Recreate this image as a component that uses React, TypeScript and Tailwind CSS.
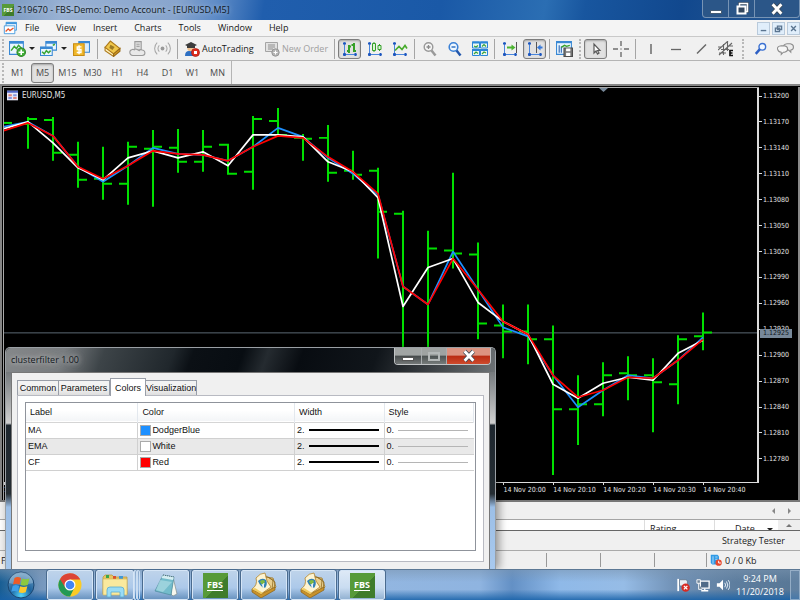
import { ReactNode, useState } from "react";
import clsx from "clsx";

const UI_FONT = "font-['Open_Sans','Noto_Sans',sans-serif]";
const TAHOMA = "font-['DejaVu_Sans_Condensed','DejaVu_Sans',sans-serif]";
const DIALOG_FONT = "font-['Liberation_Sans',Arial,sans-serif]";

type Bar = { x: number; high: number; low: number; open?: number; close?: number };

const bars: Bar[] = [
  { x: 3, high: 123, low: 123, close: 123 },
  { x: 28, high: 117, low: 149, open: 124, close: 119 },
  { x: 53, high: 117, low: 161, open: 120, close: 153 },
  { x: 78, high: 142, low: 188, open: 155, close: 180 },
  { x: 103, high: 147, low: 200, open: 179, close: 184 },
  { x: 128, high: 142, low: 205, open: 184, close: 147 },
  { x: 153, high: 130, low: 207, open: 149, close: 147 },
  { x: 178, high: 129, low: 173, open: 148, close: 162 },
  { x: 203, high: 130, low: 172, open: 162, close: 147 },
  { x: 228, high: 144, low: 175, open: 145, close: 174 },
  { x: 253, high: 116, low: 190, open: 172, close: 119 },
  { x: 278, high: 108, low: 137, open: 121, close: 135 },
  { x: 303, high: 134, low: 161, open: 138, close: 139 },
  { x: 328, high: 125, low: 182, open: 138, close: 173 },
  { x: 353, high: 151, low: 180, open: 171, close: 175 },
  { x: 378, high: 168, low: 259, open: 171, close: 212 },
  { x: 403, high: 211, low: 372, open: 214 },
  { x: 428, high: 231, low: 372, close: 249 },
  { x: 453, high: 173, low: 269, open: 251, close: 254 },
  { x: 478, high: 243, low: 340, open: 255, close: 324 },
  { x: 503, high: 305, low: 359, open: 326, close: 332 },
  { x: 528, high: 305, low: 365, open: 332, close: 340 },
  { x: 553, high: 326, low: 476, open: 340, close: 410 },
  { x: 578, high: 376, low: 446, open: 410, close: 405 },
  { x: 603, high: 363, low: 417, open: 405, close: 376 },
  { x: 628, high: 357, low: 401, open: 374, close: 376 },
  { x: 653, high: 359, low: 433, open: 376, close: 383 },
  { x: 678, high: 336, low: 405, open: 385, close: 340 },
  { x: 703, high: 313, low: 351, open: 337, close: 333 },
];

const ma = [127, 122, 136, 167, 182, 166, 148, 154, 155, 161, 147, 128, 137, 158, 174, 195, 287, 305, 252, 290, 328, 337, 376, 408, 391, 376, 379, 361, 338];
const ema = [129, 122, 143, 168, 180, 158, 151, 158, 152, 166, 135, 135, 137, 162, 172, 198, 307, 268, 259, 303, 322, 335, 385, 399, 384, 378, 381, 354, 341];
const cf = [131, 123, 136, 167, 179, 166, 151, 154, 155, 161, 147, 136, 138, 157, 172, 194, 287, 305, 259, 290, 322, 335, 376, 398, 391, 378, 379, 361, 340];

const toPoints = (values: number[]) => values.map((y, i) => `${3 + i * 25},${y}`).join(" ");

const prices = ["1.13200", "1.13170", "1.13140", "1.13110", "1.13080", "1.13050", "1.13020", "1.12990", "1.12960", "1.12930", "1.12900", "1.12870", "1.12840", "1.12810", "1.12780"];
const times = ["18:20", "18:30", "18:40", "18:50", "19:00", "19:10", "19:20", "19:30", "19:40", "19:50", "20:00", "20:10", "20:20", "20:30", "20:40"];
const menus = ["File", "View", "Insert", "Charts", "Tools", "Window", "Help"];
const timeframes = ["M1", "M5", "M15", "M30", "H1", "H4", "D1", "W1", "MN"];
const tabs = ["Common", "Parameters", "Colors", "Visualization"];
const lines = [
  { label: "MA", color: "DodgerBlue", swatch: "bg-[#1e90ff]" },
  { label: "EMA", color: "White", swatch: "bg-white" },
  { label: "CF", color: "Red", swatch: "bg-[#ff0000]" },
];

function Icon({ children, className = "size-4", box = 16 }: { children: ReactNode; className?: string; box?: number }) {
  return (
    <svg viewBox={`0 0 ${box} ${box}`} fill="none" className={clsx("block shrink-0", className)} aria-hidden>
      {children}
    </svg>
  );
}

function ToolButton({ label, active, children, className = "w-[25px]" }: { label: string; active?: boolean; children: ReactNode; className?: string }) {
  return (
    <button type="button" aria-label={label} title={label} className={clsx("flex h-5 shrink-0 items-center justify-center", className)}>
      <span
        className={clsx(
          "flex h-5 items-center justify-center",
          active && "w-[23px] rounded-[3px] border border-[#7d7d7d] bg-[#e1e1e1] shadow-[inset_0_1px_2px_#0004]"
        )}
      >
        {children}
      </span>
    </button>
  );
}

const Separator = () => <span className="mx-0.5 h-5 w-px shrink-0 bg-[#a5a5a5]" />;

const Grip = ({ className = "w-1.5" }: { className?: string }) => (
  <span className={clsx("flex h-5 shrink-0 justify-center", className)}>
    <span className="h-full border-l-2 border-dotted border-[#b8b8b8]" />
  </span>
);

const Caret = () => <span className="size-0 shrink-0 border-x-[3px] border-t-[3px] border-x-transparent border-t-[#222]" />;

// blue axes shared by the chart-mode buttons
const Axes = () => (
  <>
    <path d="M2.500 1v14M1 13.500h14" stroke="#4a86dc" />
    <path d="M1 2.500h3M13.500 12v3M1 13.500h3M2.500 12v3" stroke="#1e56bd" strokeWidth="2" />
  </>
);

function TitleBar() {
  return (
    <header className="flex h-5 shrink-0 items-center bg-[linear-gradient(100deg,#7898c0_0%,#98b1d3_8%,#88a5cd_22%,#5f8cc7_27%,#205ead_33%,#1a59a7_55%,#2b6eb3_68%,#18569f_73%,#11488e_85%,#2a5a92_100%)]">
      <FbsLogo className="ml-0.5 h-3 w-3 text-[5px]" />
      <h1 className="ml-[3px] flex-1 whitespace-nowrap text-[9px] leading-5 text-[#101820] [text-shadow:0_0_5px_#fff8]">
        219670 - FBS-Demo: Demo Account - [EURUSD,M5]
      </h1>
      <div className="flex h-[18px] self-start overflow-hidden rounded-b-[4px] border border-t-0 border-[#c3d2e280] bg-[#2b5688]">
        <button type="button" aria-label="Minimize" className="flex w-[26px] items-center justify-center border-r border-[#c3d2e280]">
          <span className="mt-1.5 h-1 w-3 border border-[#455c74] bg-white" />
        </button>
        <button type="button" aria-label="Restore" className="flex w-[26px] items-center justify-center border-r border-[#c3d2e280]">
          <Icon className="size-4">
            <path d="M5.500 2.500h8v8h-8z" stroke="#34485f" strokeWidth="3" />
            <path d="M5.500 2.500h8v8h-8z" stroke="#fff" strokeWidth="1.500" />
            <path d="M3.500 5.500h8v7h-8z" fill="#34485f" stroke="#fff" strokeWidth="2" />
          </Icon>
        </button>
        <button type="button" aria-label="Close" className="flex w-11 items-center justify-center">
          <CloseX />
        </button>
      </div>
    </header>
  );
}

const CloseX = () => (
  <Icon className="h-3.5 w-3.5">
    <path d="M3 2.500l10 11M13 2.500l-10 11" stroke="#3d4a57" strokeWidth="5" />
    <path d="M3 2.500l10 11M13 2.500l-10 11" stroke="#fff" strokeWidth="3.200" />
  </Icon>
);

function FbsLogo({ className, ruled }: { className?: string; ruled?: boolean }) {
  return (
    <span className={clsx("flex shrink-0 flex-col items-center justify-center bg-[linear-gradient(135deg,#579a38_55%,#3f7c2b_55%)] font-['Open_Sans',sans-serif] font-bold leading-none text-white", className)}>
      FBS
      {ruled && <span className="mt-px h-px w-4 bg-white" />}
    </span>
  );
}

function MenuBar() {
  return (
    <nav className="flex h-4 shrink-0 items-center bg-[#f4f4f4] text-[9px] leading-4 text-[#181818]">
      <Icon className="ml-[3px] h-3.5 w-3.5">
        <path d="M3.500 1.500h12v9h-12z" fill="#dff0fd" stroke="#3d96dd" />
        <path d="M3.500 2.500h12" stroke="#3d96dd" strokeWidth="2" />
        <path d="M1.500 5.500h12v9h-12z" fill="#fff" stroke="#3d96dd" />
        <path d="M3 12l3-3 2 2 4-3" stroke="#e4552c" strokeWidth="1.500" />
      </Icon>
      <ul className="ml-2 flex flex-1 gap-[17px]">
        {menus.map((name) => (
          <li key={name}>
            <button type="button" className="block whitespace-nowrap">{name}</button>
          </li>
        ))}
      </ul>
      <div className="flex gap-0.5 text-[#5b7590]">
        {[
          ["Minimize chart", "M4 11h8"],
          ["Restore chart", "M6.500 4.500h6v5h-6zM3.500 7.500h6v5h-6z"],
          ["Close chart", "M4.500 4.500l7 7M11.500 4.500l-7 7"],
        ].map(([label, d]) => (
          <button key={label} type="button" aria-label={label} className="flex h-[13px] w-[13px] items-center justify-center border border-[#b9cadb] bg-[#e0eefb]">
            <Icon className="size-[11px]">
              <path d={d} stroke="currentColor" strokeWidth="2" />
            </Icon>
          </button>
        ))}
      </div>
    </nav>
  );
}

function ToolBar() {
  return (
    <div role="toolbar" aria-label="Standard" className="flex h-[25px] shrink-0 items-center border-y border-t-[#c9c9c9] border-b-[#b4b4b4] bg-[#f0f0f0]">
      <Grip />
      <ToolButton label="New chart" className="w-[23px]">
        <Icon className="size-[17px]">
          <path d="M.5 1.500h13v12h-13z" fill="#eaf6ff" stroke="#3988d4" />
          <path d="M.5 2.500h13" stroke="#3988d4" strokeWidth="2" />
          <path d="M2 10l3-4 2 2 2-3 3 3" stroke="#38a532" strokeWidth="1.400" />
          <circle cx="11.500" cy="11.500" r="4" fill="#3fae35" stroke="#2d8527" />
          <path d="M11.500 9v5M9 11.500h5" stroke="#fff" strokeWidth="1.500" />
        </Icon>
      </ToolButton>
      <Caret />
      <ToolButton label="Profiles" className="w-[26px]">
        <Icon className="size-[17px]">
          <path d="M5.500 1.500h10v8h-10z" fill="#eaf6ff" stroke="#3988d4" />
          <path d="M5.500 2.500h10" stroke="#3988d4" strokeWidth="2" />
          <path d="M.5 6.500h11v8h-11z" fill="#eaf6ff" stroke="#3988d4" />
          <path d="M.5 7.500h11" stroke="#3988d4" strokeWidth="2" />
          <path d="M2 11l2 2 2-3 2 2 2-2M12 5l2-1" stroke="#38a532" strokeWidth="1.400" />
        </Icon>
      </ToolButton>
      <Caret />
      <ToolButton label="Market watch" className="w-[28px]">
        <Icon className="size-[17px]">
          <path d="M5.500 1.500h10v10h-10z" fill="#d9edfd" stroke="#3988d4" />
          <path d="M5.500 2h10" stroke="#3988d4" strokeWidth="2" />
          <path d="M.5 3.500h10v11h-10z" fill="#f0b82a" stroke="#c78c14" />
          <path d="M8 6.500H4v2.500h3.500v2.800H3.500M5.700 5v8.500" stroke="#fff" strokeWidth="1.300" />
        </Icon>
      </ToolButton>
      <Separator />
      <ToolButton label="Navigator">
        <Icon className="size-[17px]">
          <path d="M1 7l5-6 9 7-6 6z" fill="#f0c74b" stroke="#ac781a" />
          <path d="M1 7v3l8 5.500v-2.500z" fill="#fff1b8" stroke="#ac781a" />
          <path d="M9 13l6-5v2.500l-6 5z" fill="#d69b20" stroke="#9a6b18" />
          <path d="M6 4.500l4 2-2 3-3-2z" fill="#9c7a25" />
        </Icon>
      </ToolButton>
      <ToolButton label="Trader">
        <Icon className="size-[17px]">
          <path d="M5.500 1.500h6v8h-6z" fill="#dedede" stroke="#9a9a9a" />
          <path d="M7 4h3M7 6h3" stroke="#a4a4a4" />
          <path d="M3.500 14.500a3 2.800 0 01-.5-5.500q1-.5 2 .3Q6.500 7.500 9.500 10q1-1.500 3-.5 2.500.5 2.500 2.800 0 2.200-2.500 2.200z" fill="#e9e9e9" stroke="#9a9a9a" />
        </Icon>
      </ToolButton>
      <ToolButton label="Signals">
        <Icon className="size-[17px]">
          <circle cx="8" cy="8" r="1.800" fill="#999" />
          <path d="M5 5a4.200 4.200 0 000 6M11 5a4.200 4.200 0 010 6M3 2.500a7.500 7.500 0 000 11M13 2.500a7.500 7.500 0 010 11" stroke="#a8a8a8" />
        </Icon>
      </ToolButton>
      <Separator />
      <button type="button" className="flex w-20 shrink-0 items-center gap-0.5 pl-1 text-[9px] leading-4 text-[#1c1c1c]">
        <Icon className="size-4">
          <path d="M1 15q0-5 4-5h4q4 0 4 5z" fill="#2d6fc2" />
          <circle cx="6.500" cy="7" r="3.200" fill="#eec08d" />
          <path d="M1 4l6-3 6 3-2 1v2H3V5z" fill="#3c3c3c" />
          <circle cx="11.500" cy="11.500" r="4" fill="#dd2c1e" stroke="#a51a10" strokeWidth=".7" />
          <path d="M10 10h3v3h-3z" fill="#fff" />
        </Icon>
        AutoTrading
      </button>
      <button type="button" disabled className="flex w-[72px] shrink-0 items-center gap-0.5 whitespace-nowrap pl-1 text-[9px] leading-4 text-[#a0a0a0]">
        <Icon className="size-4">
          <path d="M1.500 1.500h12v9h-12z" fill="#e2e2e2" stroke="#a4a4a4" />
          <path d="M4 4h7M4 6h7M4 8h5" stroke="#8f8f8f" />
          <circle cx="11.500" cy="11.500" r="3.700" fill="#b4b4b4" stroke="#969696" />
          <path d="M11.500 9.500v4M9.500 11.500h4" stroke="#fff" />
        </Icon>
        New Order
      </button>
      <Separator />
      <ToolButton label="Bar chart" active>
        <Icon>
          <Axes />
          <path d="M7 4v8M5 10h2M7 5.500h2M12 2v9M9.500 4h2.500M12 10h2" stroke="#35a028" strokeWidth="2" />
        </Icon>
      </ToolButton>
      <ToolButton label="Candlesticks">
        <Icon>
          <Axes />
          <path d="M7 1v10M12.500 3v7" stroke="#35a028" />
          <path d="M5.500 2.500h3v7h-3zM11 4.500h3v4h-3z" fill="#dcf5d8" stroke="#35a028" />
        </Icon>
      </ToolButton>
      <ToolButton label="Line chart">
        <Icon>
          <Axes />
          <path d="M3 9.500l4-4 3 3 3-4 2 3" stroke="#46ab2b" strokeWidth="1.600" />
        </Icon>
      </ToolButton>
      <Separator />
      <ToolButton label="Zoom in">
        <Icon>
          <circle cx="6.500" cy="6" r="4.300" fill="#f5f5f5" stroke="#999" strokeWidth="1.400" />
          <path d="M4.500 6h4M6.500 4v4" stroke="#8b8b8b" strokeWidth="1.300" />
          <path d="M9.500 9.500l4 5" stroke="#999" strokeWidth="2.500" />
        </Icon>
      </ToolButton>
      <ToolButton label="Zoom out">
        <Icon>
          <circle cx="6.500" cy="6" r="4.300" fill="#eef7ff" stroke="#3b81d6" strokeWidth="1.600" />
          <path d="M4.500 6h4" stroke="#2469bf" strokeWidth="1.400" />
          <path d="M9.500 9.500l4 5" stroke="#2257ad" strokeWidth="2.500" />
        </Icon>
      </ToolButton>
      <ToolButton label="Tile windows">
        <Icon>
          <path d="M.5 1h7v6h-7zM8.500 1h7v6h-7zM.5 8.500h7v6h-7zM8.500 8.500h7v6h-7z" fill="#edf9f1" stroke="#2b86d8" />
          <path d="M0 1.500h16M0 9h16" stroke="#2b86d8" strokeWidth="2" />
          <path d="M2 5l2 1 2-1.500M10 5.500l2-2 2 2M2 13l2-2 2 1.500M10 13l2-2 2 1" stroke="#36a23b" strokeWidth="1.200" />
        </Icon>
      </ToolButton>
      <Separator />
      <ToolButton label="Auto scroll">
        <Icon>
          <Axes />
          <path d="M14.500 1v11" stroke="#555" />
          <path d="M5 6.500h6" stroke="#4cb531" strokeWidth="2" />
          <path d="M9.500 3.500l4 3-4 3z" fill="#4cb531" />
        </Icon>
      </ToolButton>
      <ToolButton label="Chart shift" active>
        <Icon>
          <Axes />
          <path d="M9.500 1v11" stroke="#555" />
          <path d="M15.500 6.500H12" stroke="#3477d8" strokeWidth="2" />
          <path d="M13.500 3.500l-3.500 3 3.500 3z" fill="#3477d8" />
        </Icon>
      </ToolButton>
      <Separator />
      <ToolButton label="Save template">
        <Icon className="size-[17px]">
          <path d="M.5 1.500h14v12h-14z" fill="#e7f5ff" stroke="#3988d4" />
          <path d="M.5 2h14" stroke="#3988d4" strokeWidth="2" />
          <path d="M3 5v7M5 6v6" stroke="#2760b0" />
          <path d="M5 7l3-2 2 1 3-1" stroke="#35a028" strokeWidth="1.300" />
          <path d="M7.500 7.500h8v8h-8z" fill="#777" stroke="#4d4d4d" />
          <path d="M9.500 8h4v2.500h-4zM9.500 12h4v3h-4z" fill="#fff" />
        </Icon>
      </ToolButton>
      <Grip />
      <ToolButton label="Cursor" active>
        <Icon>
          <path d="M6 3v9l2-2 1.500 3 1.500-1-1.500-2.500h2.500z" fill="#fff" stroke="#5b5b5b" strokeWidth="1.200" />
        </Icon>
      </ToolButton>
      <ToolButton label="Crosshair">
        <Icon>
          <path d="M8 0v5M8 11v5M0 8h5M11 8h5M7.500 8h1" stroke="#6d6d6d" strokeWidth="1.400" />
        </Icon>
      </ToolButton>
      <Separator />
      <ToolButton label="Vertical line">
        <Icon><path d="M8 3v10" stroke="#555" strokeWidth="1.300" /></Icon>
      </ToolButton>
      <ToolButton label="Horizontal line">
        <Icon><path d="M3 8.500h10" stroke="#666" strokeWidth="1.300" /></Icon>
      </ToolButton>
      <ToolButton label="Trendline">
        <Icon><path d="M4 12.500l9-9" stroke="#666" strokeWidth="1.400" /></Icon>
      </ToolButton>
      <ToolButton label="Equidistant channel">
        <Icon>
          <path d="M0 9L10 0M1 14L14 2M0 6h4M3 8.500h8M5.500 3v11M9.500 1v9M1 12h7M10 5h5" stroke="#666" strokeWidth="1.100" />
          <path d="M15 9.500h-3v5h3M12 12h2.500" stroke="#111" strokeWidth="1.700" />
        </Icon>
      </ToolButton>
      <Grip className="w-2.5" />
      <ToolButton label="Search">
        <Icon className="size-3.5">
          <circle cx="9.500" cy="5.500" r="3.800" fill="#f3f9ff" stroke="#3b71d2" strokeWidth="1.600" />
          <path d="M6.500 8.500L2 13.500" stroke="#2d5fc4" strokeWidth="2.800" />
        </Icon>
      </ToolButton>
      <ToolButton label="Chat">
        <Icon className="size-[17px]">
          <path d="M9.500 3.500h3q3 .5 3 3t-2.500 3v2l-2-2h-2q-3-.5-3-3t3.500-3z" fill="#ececec" stroke="#8d8d8d" />
          <path d="M4 5.500h3q3 .5 3 3t-3 3h-1l-2 2v-2q-3-.5-3.500-3t3.500-3z" fill="#f6f6f6" stroke="#8d8d8d" />
        </Icon>
      </ToolButton>
    </div>
  );
}

function TimeframeBar() {
  const [selected, setSelected] = useState("M5");

  return (
    <div role="toolbar" aria-label="Timeframes" className="flex h-[23px] shrink-0 items-center bg-[#f0f0f0] text-[9px] leading-4 text-[#4b4b4b]">
      <Grip />
      {timeframes.map((tf) => (
        <button
          key={tf}
          type="button"
          aria-pressed={tf === selected}
          onClick={() => setSelected(tf)}
          className={clsx("mr-0.5 h-5 w-[23px] shrink-0 rounded-[3px] border", tf === selected ? "border-[#7d7d7d] bg-[#e1e1e1] shadow-[inset_0_1px_2px_#0004]" : "border-transparent")}
        >
          {tf}
        </button>
      ))}
      <span className="h-full w-px bg-[#b4b4b4]" />
    </div>
  );
}

function PricePlot() {
  return (
    <svg viewBox="4 88 753 395" preserveAspectRatio="none" className="absolute inset-0 size-full" role="img" aria-label="EURUSD M5 bar chart">
      <path d="M4 333.500H757" stroke="#5c6874" />
      <path d="M599 88h9l-4.500 4z" fill="#778899" />
      <g stroke="#00e000" strokeWidth="2">
        {bars.map((b) => (
          <path
            key={b.x}
            d={`M${b.x} ${b.high}V${b.low}${b.open ? `M${b.x - 9} ${b.open}H${b.x}` : ""}${b.close ? `M${b.x} ${b.close}h9` : ""}`}
          />
        ))}
      </g>
      <g fill="none" strokeWidth="1.700" strokeLinejoin="round">
        <polyline points={toPoints(ma)} stroke="#1e90ff" />
        <polyline points={toPoints(ema)} stroke="#ffffff" />
        <polyline points={toPoints(cf)} stroke="#ff0000" />
      </g>
    </svg>
  );
}

function ChartWindow() {
  return (
    <section className={clsx("flex min-h-0 flex-1 border-l-2 border-t-2 border-[#858585] bg-black pl-px pt-px text-[7px] leading-[10px] text-[#e4e4e4]", TAHOMA)}>
      <div className="flex min-w-0 flex-1 flex-col border-l border-t border-[#a9a9a9]">
        <div className="relative min-h-0 flex-1 border-b border-r-2 border-[#dcdcdc]">
          <PricePlot />
          <div className="relative flex items-center gap-1 pl-[3px] pt-0.5 text-[8px]">
            <Icon className="h-[11px] w-[11px]">
              <path d="M0 1h16v14H0z" fill="#e9e9f8" />
              <path d="M0 1h16v3H0z" fill="#5367c8" />
              <path d="M2 6h5v3H2zM9 10h5v3H9z" fill="#e0847e" />
              <path d="M9 6h5v3H9zM2 10h5v3H2z" fill="#8595e0" />
            </Icon>
            EURUSD,M5
          </div>
        </div>
        <ol className="flex h-[17px] shrink-0 pr-[6px]">
          {times.map((time) => (
            <li key={time} className="min-w-0 flex-1 whitespace-nowrap">
              <span className="block h-[2px] w-px bg-[#dcdcdc]" />
              14 Nov {time}
            </li>
          ))}
        </ol>
      </div>
      <div className="relative w-[41px] shrink-0 border-r-2 border-[#8a8a8a] pb-[36px] pt-1">
        <ol className="flex h-full flex-col justify-between">
          {prices.map((price) => (
            <li key={price} className="flex items-center gap-px">
              <span className="h-px w-[3px] bg-[#dcdcdc]" />
              {price}
            </li>
          ))}
        </ol>
        <output aria-label="Bid price" className="absolute left-px top-[58.5%] h-[9px] w-8 bg-[#778899] pl-[3px] leading-[9px] text-[#10161c]">
          1.12925
        </output>
      </div>
    </section>
  );
}

function BottomPanes() {
  return (
    <div className="flex h-[69px] shrink-0 flex-col border-t-2 border-[#777] bg-[#f0f0f0] text-[9px] text-[#222]">
      <div className="flex h-[17px] items-center justify-end gap-[13px] pr-[9px]">
        <button type="button" aria-label="Scroll left" className="size-0 border-y-[3px] border-r-[3px] border-y-transparent border-r-[#888]" />
        <button type="button" aria-label="Scroll right" className="size-0 border-y-[3px] border-l-[3px] border-y-transparent border-l-[#888]" />
      </div>
      <div className="flex h-3 items-start justify-end overflow-hidden border-b border-t border-b-[#666] border-t-[#a5a5a5] bg-white leading-[18px]">
        <span className="w-[70px] border-l border-[#ddd] pl-[5px]">Rating</span>
        <span className="flex w-16 items-center gap-3 border-l border-[#ddd] pl-5">
          Date
          <Caret />
        </span>
        <span className="flex h-3 w-[22px] justify-center bg-[#eee] pt-1">
          <span className="size-0 border-x-[3px] border-b-[3px] border-x-transparent border-b-[#777]" />
        </span>
      </div>
      <div className="flex h-[19px] items-center justify-end pr-[15px] leading-4">
        <button type="button">Strategy Tester</button>
      </div>
      <footer className="flex h-[19px] items-stretch justify-end border-t border-[#aaa] py-0.5 leading-[15px]">
        <span className="flex-1 pl-px">For Help, press F1</span>
        <span className="w-[54px] border-l border-[#999]" />
        <span className="w-[54px] border-l border-[#999]" />
        <span className="w-[52px] border-l border-[#999]" />
        <span className="flex w-[94px] items-center gap-[3px] border-l border-[#999] pl-[3px]">
          <Icon className="size-3">
            <path d="M1 1h9l2 2v11H3l-2-2z" fill="#2f9ae6" />
            <path d="M4 3v10M7 4h3M7 7h3" stroke="#d7efff" />
            <circle cx="11.500" cy="11.500" r="4.200" fill="#e7482d" />
            <path d="M11.500 9v3h3" stroke="#fff" strokeWidth="1.300" />
          </Icon>
          0 / 0 Kb
        </span>
      </footer>
    </div>
  );
}

function ColorsTable() {
  return (
    <table className="w-full table-fixed border-collapse text-left">
      <colgroup>
        <col className="w-[25%]" />
        <col className="w-[35%]" />
        <col className="w-[20%]" />
        <col className="w-[20%]" />
      </colgroup>
      <thead>
        <tr className="h-[19px] border-b border-[#d5d5d5] bg-[linear-gradient(#fff_40%,#f3f5f7)]">
          {["Label", "Color", "Width", "Style"].map((name) => (
            <th key={name} scope="col" className="border-r border-[#e3e8ee] py-0 pl-1 font-normal">{name}</th>
          ))}
        </tr>
      </thead>
      <tbody>
        {lines.map((line) => (
          <tr key={line.label} className="h-4 border-b border-[#d0d0d0] even:bg-[#e9e9e9]">
            <td className="border-r border-[#d0d0d0] py-0 pl-0.5">{line.label}</td>
            <td className="border-r border-[#d0d0d0] py-0 pl-0.5">
              <span className="flex items-center gap-px">
                <span className={clsx("size-[11px] border border-[#aaa]", line.swatch)} />
                {line.color}
              </span>
            </td>
            <td className="border-r border-[#d0d0d0] py-0 pl-0.5 pr-[5px]">
              <span className="flex items-center gap-1">
                2. <span className="h-0.5 flex-1 bg-black" />
              </span>
            </td>
            <td className="py-0 pl-0.5 pr-1.5">
              <span className="flex items-center gap-1">
                0. <span className="h-px flex-1 bg-[#b5b5b5]" />
              </span>
            </td>
          </tr>
        ))}
      </tbody>
    </table>
  );
}

function IndicatorDialog() {
  const [tab, setTab] = useState("Colors");

  return (
    <div
      role="dialog"
      aria-labelledby="indicator-title"
      className={clsx(
        "absolute bottom-[31px] left-[5px] flex h-[222px] w-[491px] flex-col rounded-t-[5px] border border-b-0 border-[#9a9fa4] px-[5px] text-[9px] leading-3 text-[#111] shadow-[3px_0_8px_#0006]",
        "bg-[linear-gradient(#4d5154_0,#85898c_15%,#d0d0d0_34%,#1d262e_35%,#252d33_66%,#9cbfe7_72%,#a8c9ee_100%)]"
      )}
    >
      <div className="-mx-[5px] flex h-6 shrink-0 items-start rounded-t-[5px] bg-[linear-gradient(110deg,#85888a_0%,#777b7e_12%,#3d4448_20%,#20272c_34%,#0b1015_38%,#080d12_48%,#252b30_53%,#080c11_60%,#10151a_75%,#565b5e_94%,#6e7376_100%)] pl-[5px]">
        <h2 id="indicator-title" className="flex-1 text-[9px] leading-6 text-[#10161b] [text-shadow:0_0_5px_#ccc,0_0_8px_#bbb]">
          clusterfilter 1.00
        </h2>
        <div className="mr-1 flex h-[17px] overflow-hidden rounded-b-[4px] border border-t-0 border-[#c1c4c6]">
          <button type="button" aria-label="Minimize" className="flex w-[27px] items-end justify-center border-r border-[#a9adaf] bg-[linear-gradient(#a1a5a4_45%,#454a4b_50%,#747878)] pb-[3px]">
            <span className="h-1 w-3 border border-[#555] bg-white" />
          </button>
          <button type="button" aria-label="Maximize" disabled className="flex w-[25px] items-center justify-center border-r border-[#a9adaf] bg-[linear-gradient(#9fa3a2_45%,#4c5252_50%,#777c7b)]">
            <span className="h-[9px] w-3 border-2 border-[#b4b8b8]" />
          </button>
          <button type="button" aria-label="Close" className="flex w-[43px] items-center justify-center bg-[linear-gradient(#dc9381_45%,#b92b13_50%,#ce4b2d)]">
            <CloseX />
          </button>
        </div>
      </div>
      <div className={clsx("flex min-h-0 flex-1 flex-col border border-b-0 border-[#777] bg-[#f0f0f0] px-[5px] pb-[7px] pt-1", DIALOG_FONT)}>
        <div role="tablist" className="flex h-[18px] shrink-0 items-end">
          {tabs.map((name) => (
            <button
              key={name}
              type="button"
              role="tab"
              aria-selected={name === tab}
              onClick={() => setTab(name)}
              className={clsx(
                "shrink-0 border border-b-0 border-[#999ea8]",
                name === "Common" && "w-[42px]",
                name === "Colors" && "w-9",
                (name === "Parameters" || name === "Visualization") && "w-[51px]",
                name === tab ? "relative -mb-px h-[18px] bg-white leading-4" : "h-[15px] border-l-0 bg-[linear-gradient(#f3f3f3_50%,#dedede)] leading-[14px] first:border-l"
              )}
            >
              {name}
            </button>
          ))}
        </div>
        <div role="tabpanel" className="flex-1 border border-[#b8bac2] bg-white px-[7px] pb-[10px] pt-1.5">
          <div className="h-full border border-[#8f939b] pr-px">
            <ColorsTable />
          </div>
        </div>
      </div>
    </div>
  );
}

function StickyNotes() {
  return (
    <Icon className="h-[26px] w-[26px]" box={26}>
      <path d="M13 5l9 1 3 9-10 8-5-2z" fill="#e9cf8c" stroke="#9c7424" strokeWidth=".8" />
      <path d="M15 4l7 4-1 10M17 5l7 5-1 7" stroke="#8f6c26" strokeWidth=".8" />
      <path d="M1 17l9 5 14-7v3l-14 8-9-6z" fill="#c8922a" stroke="#8a6218" strokeWidth=".7" />
      <path d="M1 17q6-4 4-11 4-5 9-5 1 9 6 14l-10 7z" fill="#fdf4d2" stroke="#b08228" strokeWidth=".8" />
      <path d="M1 17l9 5 2-1-8-5z" fill="#f1cc5f" />
      <path d="M7 9q4-4 8-1 2 4-1 8-4 0-7-7z" fill="#2f80b4" />
      <path d="M9 9q3-2 5 0l-1 3q-3 1-4-3z" fill="#7fba42" />
      <path d="M11 12l2 4M13 11l-1 4" stroke="#fff" />
    </Icon>
  );
}

function TaskButton({ label, active, children, className = "w-[46px]" }: { label: string; active?: boolean; children: ReactNode; className?: string }) {
  return (
    <button
      type="button"
      aria-label={label}
      title={label}
      className={clsx(
        "flex h-[30px] shrink-0 items-center justify-center rounded-[2px] border border-[#d5e5f6] outline outline-[#4a6b8f]",
        active ? "bg-[linear-gradient(#dde9f6,#c9dcf1_60%,#93b2d2)]" : "bg-[linear-gradient(#bed3ea,#acc9ea_60%,#6a94c0)]",
        className
      )}
    >
      {children}
    </button>
  );
}

function TaskBar() {
  return (
    <div className="relative flex h-[31px] shrink-0 items-center border-t border-[#5c7895] bg-[linear-gradient(90deg,#185e94_0,#7596bc_5%,#9bbce2_12%,#8fb4e0_60%,#6390c5_64%,#8fb9e8_70%,#96bce6_78%,#7293b8_84%,#5d7d9e_92%,#587795_100%)]">
      <div className="absolute inset-0 bg-[linear-gradient(#7a94af88_0,transparent_40%,transparent_65%,#1761a8dd_100%)]" />
      <div className="relative flex flex-1 items-center gap-[3px] pl-[7px]">
        <button type="button" aria-label="Start" className="mr-[9px] shrink-0">
          <Icon className="h-7 w-7" box={28}>
            <defs>
              <radialGradient id="orb" cx=".5" cy=".9" r=".8">
                <stop offset="0" stopColor="#53d4fb" />
                <stop offset=".5" stopColor="#1c639f" />
                <stop offset="1" stopColor="#5f93bb" />
              </radialGradient>
            </defs>
            <circle cx="14" cy="14" r="13" fill="url(#orb)" stroke="#1b4671" />
            <path d="M2 12a12 11 0 0124 0q-12 4-24 0z" fill="#fff" opacity=".25" />
            <path d="M7.500 7q3-2 6.500 0l-1.500 6.500q-3-1.500-6.500 0z" fill="#ee5b26" />
            <path d="M15 7.500q3 1.500 7.500 0l-1.800 6.500q-3.500 1.500-7.200 0z" fill="#8cc83f" />
            <path d="M5.700 14.800q3-1.500 6.500 0l-1.500 6q-3-1.500-6.500 0z" fill="#3e9fe8" />
            <path d="M13.200 15.200q3 1.500 7.200 0l-1.700 6q-3.500 1.500-7 0z" fill="#fcc82e" />
          </Icon>
        </button>
        <TaskButton label="Google Chrome">
          <Icon className="h-6 w-6" box={24}>
            <circle cx="12" cy="12" r="11.500" fill="#fbcb26" />
            <path d="M2 6.200A11.500 11.500 0 0012 23.500L16.500 14.500 12 12z" fill="#229954" />
            <path d="M12 6.500h10.200L22 6A11.500 11.500 0 002 6.200L7.500 15z" fill="#db4437" />
            <circle cx="12" cy="12" r="5.500" fill="#fff" />
            <circle cx="12" cy="12" r="4.300" fill="#4285f4" />
          </Icon>
        </TaskButton>
        <span className="flex shrink-0">
          <TaskButton label="Windows Explorer" className="w-[38px]">
            <Icon className="h-[26px] w-[26px]" box={26}>
              <path d="M1 5l2-2h7l2 2h13v17H1z" fill="#e5c565" stroke="#b99237" strokeWidth=".7" />
              <path d="M4 3h3v3H4z" fill="#3ba64a" />
              <path d="M11 4h3v3h-3z" fill="#d9502d" />
              <path d="M17 4h4v3h-4z" fill="#4097d6" />
              <path d="M1 7h24v16H1z" fill="#fae99e" stroke="#d2b251" strokeWidth=".6" />
              <path d="M5 25v-7q0-3 3-3h11q3 0 3 3v7h-4v-5H9v5z" fill="#9adcf5" stroke="#58abd2" strokeWidth=".8" />
            </Icon>
          </TaskButton>
          <span className="h-[30px] w-[3px] rounded-r-[2px] border border-[#c9ddf2]" />
          <span className="h-[30px] w-[3px] rounded-r-[2px] border border-[#c9ddf2]" />
        </span>
        <TaskButton label="Notepad">
          <Icon className="h-6 w-6" box={24}>
            <path d="M19 4l4 17-4 2-2-2z" fill="#f7f7ee" stroke="#7f8c8c" strokeWidth=".7" />
            <path d="M9 2l11 2-3 18L1 18z" fill="#73bccb" stroke="#4c899b" strokeWidth=".7" />
            <path d="M9 2l11 2-1 3L7.500 5z" fill="#d5eef2" />
            <path d="M6 7l12 2-9 10-7-2z" fill="#b5e1e8" opacity=".6" />
            <path d="M9 2l11 2" stroke="#4e6872" strokeDasharray="1 1" />
          </Icon>
        </TaskButton>
        <TaskButton label="FBS Trader">
          <FbsLogo ruled className="h-[25px] w-[25px] text-[9px]" />
        </TaskButton>
        <TaskButton label="MetaEditor"><StickyNotes /></TaskButton>
        <TaskButton label="MetaEditor 2"><StickyNotes /></TaskButton>
        <TaskButton label="FBS MetaTrader 5" active>
          <FbsLogo ruled className="h-[25px] w-[25px] text-[9px]" />
        </TaskButton>
      </div>
      <div className="relative flex h-full items-center gap-1.5 text-white">
        <Icon className="size-3.5">
          <path d="M2.500 1v14" stroke="#fff" strokeWidth="2" />
          <path d="M4 2h7l2 1v6H4z" fill="#e8edf3" stroke="#526478" strokeWidth=".7" />
          <circle cx="11" cy="11" r="4.800" fill="#d82a22" />
          <path d="M9 9l4 4M13 9l-4 4" stroke="#fff" strokeWidth="1.500" />
        </Icon>
        <Icon className="size-3.5">
          <path d="M5 3.500h10v8H5z" fill="#506b88" stroke="#fff" strokeWidth="1.500" />
          <path d="M10 12v2M6 14.500h8" stroke="#fff" strokeWidth="1.600" />
          <path d="M1 2h4v4H1zM3 6v7h4" fill="#73889b" stroke="#fff" />
        </Icon>
        <Icon className="size-3.5">
          <path d="M1 6h3l4-4v12l-4-4H1z" fill="#fff" />
          <path d="M10 5.500q2 2.500 0 5M12 4q3 4 0 8M14 2.500q4 5.500 0 11" stroke="#e8f0f8" strokeWidth="1.100" />
        </Icon>
        <time dateTime="2018-11-20T21:24" className="w-12 whitespace-nowrap text-center text-[9px] leading-[13px]">
          9:24 PM
          <br />
          11/20/2018
        </time>
        <button type="button" aria-label="Show desktop" className="h-full w-2.5 border border-[#b4c8dc99] bg-[#6c8cae80]" />
      </div>
    </div>
  );
}

export default function App() {
  return (
    <div className={clsx("relative flex h-screen min-h-[480px] flex-col overflow-hidden bg-[#f0f0f0]", UI_FONT)}>
      <TitleBar />
      <MenuBar />
      <ToolBar />
      <TimeframeBar />
      <ChartWindow />
      <BottomPanes />
      <IndicatorDialog />
      <TaskBar />
    </div>
  );
}
